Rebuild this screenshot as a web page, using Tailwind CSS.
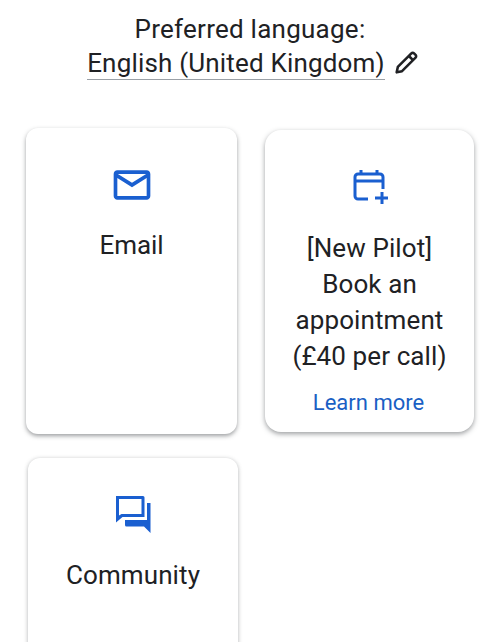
<!doctype html>
<html>
  <head>
    <title>Contact</title>
    <meta charset="UTF-8" />
    <script src="https://cdn.jsdelivr.net/npm/@tailwindcss/browser@4"></script>
  </head>
  <body class="h-[642px] w-[500px] overflow-hidden bg-white font-['Roboto',sans-serif] text-[26px] text-[#202124]">
    <header class="pt-[11px] text-center leading-[36px] tracking-[0.25px]">
      <div>Preferred language:</div>
      <div class="flex justify-center items-center pl-[7px]">
        <span class="border-b border-[#9aa0a6] leading-[32px] tracking-[0.18px]">English (United Kingdom)</span>
        <svg class="ml-[7px] mb-[1px] h-[28px] w-[28px]" viewBox="0 0 24 24" fill="none" stroke="#202124" stroke-width="2.200" stroke-linejoin="round">
          <path d="M4 20l1-4.600L16.600 3.800a1.600 1.600 0 0 1 2.300 0l1.300 1.300a1.600 1.600 0 0 1 0 2.300L8.600 19z" />
          <path d="M14.500 6l3.500 3.500" />
        </svg>
      </div>
    </header>

    <main class="mt-[48px]">
      <div class="flex items-start">
        <section class="ml-[26px] h-[306px] w-[211px] rounded-xl bg-white pt-[35px] text-center shadow-[0_2px_4px_rgba(60,64,67,0.5)]">
          <svg class="mx-auto h-[44px] w-[44px]" viewBox="0 0 24 24" fill="#1a5fd0">
            <path d="M4 4h16c1.100 0 2 .9 2 2v12c0 1.100-.9 2-2 2H4c-1.100 0-2-.9-2-2V6c0-1.100.9-2 2-2zm16 4.200-8 5-8-5V18h16V8.200zM19.700 6H4.300L12 10.800 19.700 6z" />
          </svg>
          <div class="mt-[20px] font-[450] leading-[36px] tracking-[-0.1px]">Email</div>
        </section>

        <section class="ml-[28px] mt-[2px] h-[302px] w-[209px] rounded-2xl bg-white pt-[36px] text-center shadow-[0_2px_5px_rgba(60,64,67,0.5)]">
          <svg class="mx-auto -translate-x-[1px] h-[40px] w-[40px]" viewBox="0 0 40 40" fill="none" stroke="#1a5fd0" stroke-width="3">
            <path d="M19 33H9a3 3 0 0 1-3-3V11a3 3 0 0 1 3-3h22a3 3 0 0 1 3 3v12" />
            <path d="M6 15h28M12 4v5M28 4v5M33 26v12M26 32h13" />
          </svg>
          <div class="mt-[24px] font-[450] leading-[36px] tracking-[0.1px]">
            [New Pilot]<br />Book an<br />appointment<br />(£40 per call)
          </div>
          <a class="mt-[14px] block -translate-x-[1px] text-[22px] leading-[30px] text-[#1a5fc4]" href="#">Learn more</a>
        </section>
      </div>

      <section class="ml-[28px] mt-[24px] h-[260px] w-[210px] rounded-xl bg-white pt-[36px] text-center shadow-[0_1px_4px_rgba(60,64,67,0.4)]">
        <svg class="mx-auto h-[40px] w-[40px]" viewBox="0 0 40 40" fill="#1a5fd0">
          <path d="M3 2h27a1.500 1.500 0 0 1 1.500 1.500V23H9.500L3 28.500V2zm3 3v16.500l2.500-1.500H28.500V5H6z" />
          <path d="M34 9h3.500v30L31 32.500H13.500a1.500 1.500 0 0 1-1.500-1.500V26h22V9z" />
        </svg>
        <div class="mt-[23px] font-[450] leading-[36px] tracking-[0.1px]">Community</div>
      </section>
    </main>
  </body>
</html>
